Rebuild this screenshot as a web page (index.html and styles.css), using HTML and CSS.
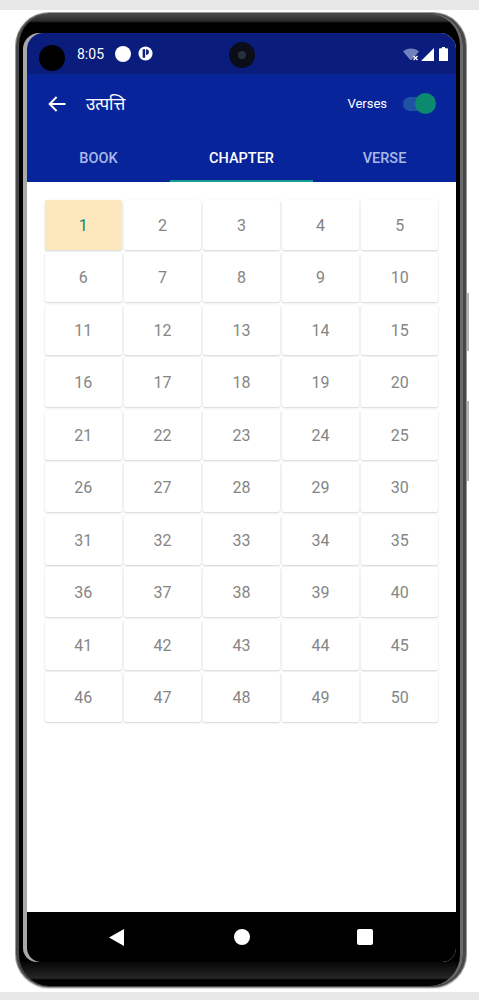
FILE: index.html
```html
<!DOCTYPE html>
<html lang="hi">
<head>
<meta charset="utf-8">
<title>उत्पत्ति</title>
<link rel="stylesheet" href="styles.css">
</head>
<body>
<div class="strip strip-top"></div>
<main class="stage">
  <div class="phone">
    <span class="side-btn side-btn-a"></span>
    <span class="side-btn side-btn-b"></span>
    <div class="bezel">
      <div class="glass">
        <div class="screen">
          <header class="statusbar">
            <span class="hole"></span>
            <span class="time">8:05</span>
            <span class="dot"></span>
            <svg class="ind" viewBox="0 0 16 16"><circle cx="8" cy="8" r="7.5" fill="#fff"/><path d="M5 3.5h2.6v9H5z" fill="#0a1c7c"/><path d="M8.6 3.5a3 3 0 0 1 0 6z" fill="#0a1c7c"/></svg>
            <span class="camera"><span class="lens"></span></span>
            <span class="status-icons">
              <svg class="wifi" viewBox="0 0 16 14"><path d="M0 4.5C4 .5 12 .5 16 4.5L8.6 13H7.4z" fill="#6f82bd"/><path d="M10.5 9l4 4m0-4l-4 4" stroke="#fff" stroke-width="1.3"/></svg>
              <svg class="signal" viewBox="0 0 14 14"><path d="M14 0v14H0z" fill="#fff"/></svg>
              <svg class="battery" viewBox="0 0 9 14"><path d="M3 0h3v1.2h2a1 1 0 0 1 1 1V14H0V2.2a1 1 0 0 1 1-1h2z" fill="#fff"/></svg>
            </span>
          </header>
          <div class="appbar">
            <svg class="back" viewBox="0 0 18 16"><path d="M17.5 8H2M8.6 1 1.6 8l7 7" fill="none" stroke="#fff" stroke-width="1.9"/></svg>
            <h1 class="title">उत्पत्ति</h1>
            <span class="verses">Verses</span>
            <span class="toggle"><span class="thumb"></span></span>
          </div>
          <nav class="tabs">
            <a class="tab">BOOK</a>
            <a class="tab tab-active">CHAPTER</a>
            <a class="tab">VERSE</a>
          </nav>
          <section class="content">
            <div class="grid">
              <div class="cell cell-active">1</div><div class="cell">2</div><div class="cell">3</div><div class="cell">4</div><div class="cell">5</div>
              <div class="cell">6</div><div class="cell">7</div><div class="cell">8</div><div class="cell">9</div><div class="cell">10</div>
              <div class="cell">11</div><div class="cell">12</div><div class="cell">13</div><div class="cell">14</div><div class="cell">15</div>
              <div class="cell">16</div><div class="cell">17</div><div class="cell">18</div><div class="cell">19</div><div class="cell">20</div>
              <div class="cell">21</div><div class="cell">22</div><div class="cell">23</div><div class="cell">24</div><div class="cell">25</div>
              <div class="cell">26</div><div class="cell">27</div><div class="cell">28</div><div class="cell">29</div><div class="cell">30</div>
              <div class="cell">31</div><div class="cell">32</div><div class="cell">33</div><div class="cell">34</div><div class="cell">35</div>
              <div class="cell">36</div><div class="cell">37</div><div class="cell">38</div><div class="cell">39</div><div class="cell">40</div>
              <div class="cell">41</div><div class="cell">42</div><div class="cell">43</div><div class="cell">44</div><div class="cell">45</div>
              <div class="cell">46</div><div class="cell">47</div><div class="cell">48</div><div class="cell">49</div><div class="cell">50</div>
            </div>
          </section>
          <footer class="navbar">
            <svg class="nav-back" viewBox="0 0 15 17"><path d="M15 0v17L0 8.5z" fill="#fff"/></svg>
            <span class="nav-home"></span>
            <span class="nav-recent"></span>
          </footer>
        </div>
      </div>
    </div>
  </div>
</main>
<div class="strip strip-bottom"></div>
</body>
</html>
```

FILE: styles.css
```css
* { box-sizing: border-box; }
html, body { margin: 0; padding: 0; }
body {
  width: 479px;
  height: 1000px;
  overflow: hidden;
  background: #fff;
  font-family: Roboto, "Noto Sans", "Liberation Sans", sans-serif;
  display: flex;
  flex-direction: column;
}
.strip { background: #e8e8e8; flex: none; }
.strip-top { height: 10px; }
.strip-bottom { height: 8px; }
.stage {
  flex: 1;
  padding: 2px 12px 4px 15px;
}
.phone {
  position: relative;
  height: 976px;
  border-radius: 34px;
  background: #9a9a9a;
  padding: 1px;
  box-shadow: 0 1px 0 #ddd;
}
.side-btn {
  position: absolute;
  right: -2px;
  width: 2px;
  background: #b5b5b5;
}
.side-btn-a { top: 281px; height: 58px; }
.side-btn-b { top: 389px; height: 80px; }
.bezel {
  height: 100%;
  border-radius: 33px;
  background: #484848;
  padding: 1px 3px 1px 3px;
}
.glass {
  height: 100%;
  border-radius: 31px;
  background:
    linear-gradient(#4a4a4a 0, #2a2a2a 7px, #000 9px, #000 947px, #060606 948px, #262626 964px, #020202 966px);
  padding: 19px 7px 0 8px;
  box-shadow: inset -3px 0 0 #6a6a6a;
}
.screen {
  display: flex;
  flex-direction: column;
  height: 929px;
  border-radius: 16px 16px 14px 14px;
  overflow: hidden;
  background: #fff;
  box-shadow: -4px 0 0 #a8a8a8;
}
.statusbar {
  position: relative;
  flex: none;
  height: 41px;
  background: #0a1c7c;
  display: flex;
  align-items: center;
  padding: 0 8px 0 50px;
  color: #fff;
}
.hole {
  position: absolute;
  left: 12px;
  top: 12px;
  width: 26px;
  height: 26px;
  border-radius: 50%;
  background: #000;
}
.time { font-size: 14px; margin-right: 11px; }
.dot {
  width: 16px;
  height: 16px;
  border-radius: 50%;
  background: #fff;
  margin-right: 7px;
}
.ind { width: 15px; height: 15px; }
.camera {
  position: absolute;
  left: 202px;
  top: 9px;
  width: 26px;
  height: 26px;
  border-radius: 50%;
  background: #0b0d18;
  display: flex;
  align-items: center;
  justify-content: center;
}
.lens {
  width: 8px;
  height: 8px;
  border-radius: 50%;
  background: #2a2f3c;
}
.status-icons {
  margin-left: auto;
  display: flex;
  align-items: flex-end;
  gap: 2px;
}
.wifi { width: 16px; height: 14px; }
.signal { width: 13px; height: 13px; }
.battery { width: 9px; height: 14px; margin-left: 3px; }
.appbar {
  flex: none;
  height: 59px;
  background: #08249a;
  display: flex;
  align-items: center;
  padding: 0 23px 0 21px;
  color: #fff;
}
.back { width: 18px; height: 16px; margin-right: 20px; }
.title {
  margin: 0;
  font-size: 17px;
  font-weight: 400;
  font-family: "Noto Sans", "Noto Sans Devanagari", sans-serif;
}
.verses { margin-left: auto; font-size: 13px; margin-right: 16px; }
.toggle {
  position: relative;
  width: 30px;
  height: 14px;
  border-radius: 7px;
  background: #1f52a5;
}
.thumb {
  position: absolute;
  right: -3px;
  top: -3.5px;
  width: 21px;
  height: 21px;
  border-radius: 50%;
  background: #0c8a70;
}
.tabs {
  flex: none;
  height: 49px;
  background: #08249a;
  display: grid;
  grid-template-columns: repeat(3, 1fr);
}
.tab {
  display: flex;
  align-items: center;
  justify-content: center;
  padding-top: 3px;
  font-size: 14.5px;
  font-weight: 500;
  color: #a9b9e8;
  border-bottom: 2px solid transparent;
}
.tab-active {
  color: #fff;
  border-bottom-color: #14a08c;
}
.content {
  flex: 1;
  padding: 18px 18px 0;
  background: #fff;
}
.grid {
  display: grid;
  grid-template-columns: repeat(5, 1fr);
  gap: 2.44px;
}
.cell {
  height: 50px;
  display: flex;
  align-items: center;
  justify-content: center;
  padding-top: 1px;
  font-size: 16px;
  color: #858585;
  background: #fff;
  border-radius: 2px;
  box-shadow: 0 1px 2px rgba(0,0,0,.16), 0 0 1px rgba(0,0,0,.08);
}
.cell-active {
  background: #fde8bd;
  color: #12866a;
}
.navbar {
  flex: none;
  height: 50px;
  background: #000;
  display: flex;
  align-items: center;
  padding: 0 83px 0 82px;
  justify-content: space-between;
}
.nav-back { width: 15px; height: 17px; }
.nav-home { width: 16px; height: 16px; border-radius: 50%; background: #fff; margin-left: 3px; }
.nav-recent { width: 16px; height: 16px; border-radius: 2px; background: #fff; }
```
